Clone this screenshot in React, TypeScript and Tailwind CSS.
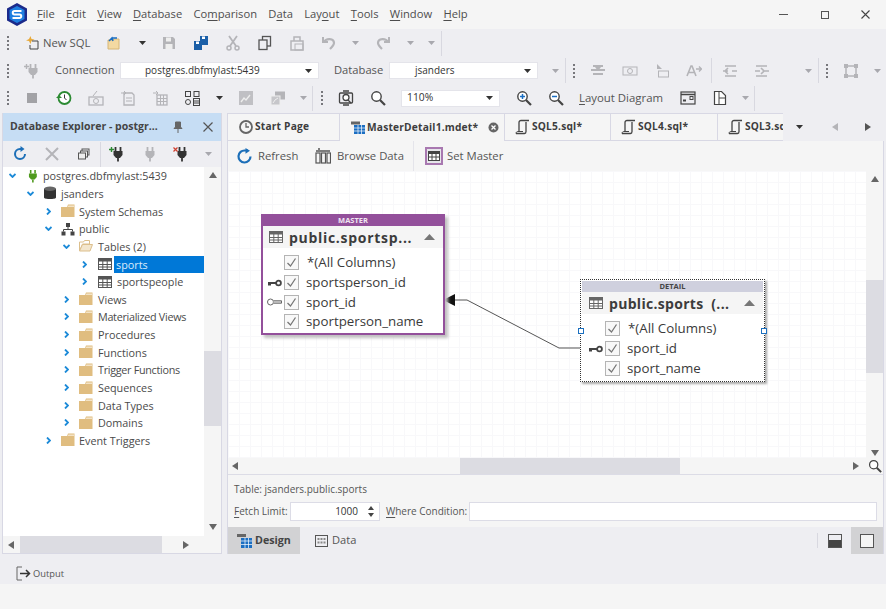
import { ReactNode } from 'react';

const Grip = () => (
  <div className="w-[16px] h-[16px] flex flex-col items-center justify-between py-[1px] shrink-0">
    <span className="w-[2px] h-[2px] bg-[#77777c]" />
    <span className="w-[2px] h-[2px] bg-[#77777c]" />
    <span className="w-[2px] h-[2px] bg-[#77777c]" />
    <span className="w-[2px] h-[2px] bg-[#77777c]" />
  </div>
);

const Sep = () => <div className="w-[1px] h-[25px] bg-[#d8d8e0] shrink-0" />;

const Caret = ({ w = 'w-[20px]', dim = false }: { w?: string; dim?: boolean }) => (
  <div className={`${w} flex justify-center shrink-0`}>
    <svg width="7" height="4" viewBox="0 0 7 4">
      <path d="M0 0h7L3.500 4z" fill={dim ? '#a8a8ae' : '#333'} />
    </svg>
  </div>
);

const Slot = ({ children }: { children: ReactNode }) => (
  <div className="w-[32px] flex justify-center items-center shrink-0">{children}</div>
);

const Ic = ({ children, size = 16 }: { children: ReactNode; size?: number }) => (
  <svg width={size} height={size} viewBox="0 0 16 16" fill="none" className="shrink-0">
    {children}
  </svg>
);

const G = '#b4b4b8';

const PlugIcon = ({ c = G, size = 16, mark }: { c?: string; size?: number; mark?: 'plus' | 'x' | 'greyPlus' }) => (
  <Ic size={size}>
    <path d="M6.500 1v4M11.500 1v4" stroke={c} strokeWidth="1.800" />
    <path d="M4.500 5h9v4l-2.500 3H7L4.500 9z" fill={c} />
    <path d="M9 12v3.500" stroke={c} strokeWidth="1.800" />
    {mark === 'plus' && <path d="M0 3.500h5M2.500 1v5" stroke="#2c8a33" strokeWidth="1.400" />}
    {mark === 'greyPlus' && <path d="M0 3.500h5M2.500 1v5" stroke={c} strokeWidth="1.400" />}
    {mark === 'x' && <path d="M.5 1.500l4 4M4.500 1.500l-4 4" stroke="#d04030" strokeWidth="1.200" />}
  </Ic>
);

const GridIcon = ({ c = '#555' }: { c?: string }) => (
  <Ic>
    <rect x="1.500" y="2.500" width="13" height="11" fill="#fff" stroke={c} />
    <rect x="1.500" y="2.500" width="13" height="3" fill={c} />
    <path d="M1.500 8.500h13M1.500 11h13M5.800 5v8.500M10.200 5v8.500" stroke={c} />
  </Ic>
);

const Folder = ({ open = false }: { open?: boolean }) => (
  <svg width="14" height="14" viewBox="0 0 14 14" className="shrink-0">
    {open ? (
      <>
        <path d="M.5 12V3h4l1-1.500h5V5H3.500L.5 12z" fill="#fff" stroke="#dcbf8c" />
        <path d="M.5 12l3-6.500h10L11 12z" fill="#f3e6cd" stroke="#dcbf8c" />
      </>
    ) : (
      <>
        <path d="M0 3h6l1-2.500h6.500V13H0z" fill="#e0bd80" />
        <path d="M6.500 3l1-1.500h5.500V3z" fill="#f3e3c6" />
      </>
    )}
  </svg>
);

const Arrow = ({ open }: { open: boolean }) => (
  <div className="w-[19px] flex justify-start pl-[3px] shrink-0">
    {open ? (
      <svg width="7" height="5" viewBox="0 0 7 5">
        <path d="M.5 1L3.500 4 6.500 1" stroke="#1c8ad8" strokeWidth="1.800" fill="none" />
      </svg>
    ) : (
      <svg width="5" height="7" viewBox="0 0 5 7" className="ml-[1px]">
        <path d="M1 .5L4 3.500 1 6.500" stroke="#1c8ad8" strokeWidth="1.800" fill="none" />
      </svg>
    )}
  </div>
);

type TreeRow = {
  d: number;
  label: string;
  open?: boolean;
  icon: 'plug' | 'db' | 'schema' | 'folder' | 'openFolder' | 'table';
  sel?: boolean;
  tight?: boolean;
};

const tree: TreeRow[] = [
  { d: 0, label: 'postgres.dbfmylast:5439', open: true, icon: 'plug' },
  { d: 1, label: 'jsanders', open: true, icon: 'db' },
  { d: 2, label: 'System Schemas', icon: 'folder' },
  { d: 2, label: 'public', open: true, icon: 'schema' },
  { d: 3, label: 'Tables (2)', open: true, icon: 'openFolder' },
  { d: 4, label: 'sports', icon: 'table', sel: true },
  { d: 4, label: 'sportspeople', icon: 'table' },
  { d: 3, label: 'Views', icon: 'folder' },
  { d: 3, label: 'Materialized Views', icon: 'folder', tight: true },
  { d: 3, label: 'Procedures', icon: 'folder' },
  { d: 3, label: 'Functions', icon: 'folder' },
  { d: 3, label: 'Trigger Functions', icon: 'folder', tight: true },
  { d: 3, label: 'Sequences', icon: 'folder' },
  { d: 3, label: 'Data Types', icon: 'folder' },
  { d: 3, label: 'Domains', icon: 'folder' },
  { d: 2, label: 'Event Triggers', icon: 'folder' },
];

const indent = ['pl-[3px]', 'pl-[21px]', 'pl-[39px]', 'pl-[57px]', 'pl-[75px]'];

const TreeIcon = ({ icon }: { icon: TreeRow['icon'] }) => {
  if (icon === 'plug') return <PlugIcon c="#4f9a1e" size={14} />;
  if (icon === 'db')
    return (
      <svg width="14" height="14" viewBox="0 0 14 14" className="shrink-0">
        <path d="M1 3v8.500c0 2 12 2 12 0V3z" fill="#333" />
        <ellipse cx="7" cy="2.800" rx="6" ry="2.200" fill="#666" />
      </svg>
    );
  if (icon === 'schema')
    return (
      <svg width="14" height="14" viewBox="0 0 14 14" className="shrink-0">
        <rect x="5" y="1" width="4" height="4" fill="#444" />
        <rect x="0.500" y="9.500" width="4" height="4" fill="#444" />
        <rect x="9.500" y="9.500" width="4" height="4" fill="#444" />
        <path d="M7 5v2.500M2.500 9.500v-2h9v2" stroke="#444" fill="none" />
      </svg>
    );
  if (icon === 'folder') return <Folder />;
  if (icon === 'openFolder') return <Folder open />;
  return <GridIcon />;
};

const U = ({ children }: { children: ReactNode }) => <span className="underline underline-offset-2">{children}</span>;

const Combo = ({ w, text, pad }: { w: string; text: string; pad: string }) => (
  <div className={`${w} ${pad} h-[17px] bg-white border border-[#e4e4ea] flex items-center justify-between pr-[6px] shrink-0 text-[10px] text-[#333]`}>
    <span>{text}</span>
    <svg width="7" height="4" viewBox="0 0 7 4">
      <path d="M0 0h7L3.500 4z" fill="#333" />
    </svg>
  </div>
);

const Check = () => (
  <div className="w-[15px] h-[15px] border border-[#b4b4b4] bg-[#f8f8f8] flex items-center justify-center shrink-0">
    <svg width="11" height="11" viewBox="0 0 11 11">
      <path d="M1.500 6l3 3 5-7.500" stroke="#777" strokeWidth="1.300" fill="none" />
    </svg>
  </div>
);

const KeyIcon = ({ hollow = false }: { hollow?: boolean }) => (
  <svg width="15" height="8" viewBox="0 0 15 8" className="shrink-0">
    {hollow ? (
      <>
        <circle cx="3.500" cy="4" r="3" fill="#fff" stroke="#666" />
        <path d="M6.500 2.800h8v2.400h-8" fill="#ddd" stroke="#666" />
      </>
    ) : (
      <>
        <path d="M1 3h8v2H4v1.500H1z" fill="#444" />
        <circle cx="11.500" cy="4" r="2.400" fill="#fff" stroke="#444" strokeWidth="1.800" />
      </>
    )}
  </svg>
);

const EntityRow = ({ name, keyIcon, star }: { name: string; keyIcon?: 'pk' | 'fk'; star?: boolean }) => (
  <div className="h-[19.700px] flex items-center">
    <div className="w-[19px] flex justify-center shrink-0">
      {keyIcon && <KeyIcon hollow={keyIcon === 'fk'} />}
    </div>
    <Check />
    <span className={`${star ? 'ml-[8px]' : 'ml-[7px]'} text-[13.300px] leading-none text-[#3a3a3a] whitespace-nowrap`}>{name}</span>
  </div>
);

const EntityTitle = ({ title, pad, track }: { title: string; pad: string; track: string }) => (
  <div className={`h-[22px] bg-[#f5f5f5] flex items-center ${pad} pr-[8px]`}>
    <GridIcon c="#666" />
    <span className={`ml-[5px] flex-1 font-bold text-[14px] ${track} text-[#3c3c3c] whitespace-pre overflow-hidden`}>{title}</span>
    <svg width="11" height="6" viewBox="0 0 11 6">
      <path d="M0 6h11L5.500 0z" fill="#777" />
    </svg>
  </div>
);

const Tab = ({ w, icon, label, active, close }: { w: string; icon: ReactNode; label: string; active?: boolean; close?: boolean }) => (
  <div className={`${w} h-[28px] shrink-0 bg-[#f5f5f5] border-t border-r border-[#d8d8e4] flex items-center pl-[10px] overflow-hidden ${active ? 'border-b-0' : 'border-b'}`}>
    {icon}
    <span className="ml-[1px] font-bold text-[10.200px] tracking-[0.2px] text-[#3d3d3d] whitespace-nowrap">{label}</span>
    {close && (
      <svg width="11" height="11" viewBox="0 0 11 11" className="ml-[10px] shrink-0">
        <circle cx="5.500" cy="5.500" r="5" fill="#666" />
        <path d="M3.500 3.500l4 4M7.500 3.500l-4 4" stroke="#fff" strokeWidth="1.300" />
      </svg>
    )}
  </div>
);

const ScriptIcon = () => (
  <Ic>
    <path d="M4 13V3.500C4 2 5 1.500 6 1.500h8M1 14.500h8.500c1 0 1.500-1 1.500-2V3" stroke="#444" strokeWidth="1.300" fill="none" />
    <path d="M1 14.500c0-1.500 1-2 2-2h5" stroke="#444" fill="none" />
  </Ic>
);

const Tri = ({ dir, c = '#666' }: { dir: 'l' | 'r' | 'u' | 'd'; c?: string }) => {
  const p = { l: 'M6 0v8L0 4z', r: 'M0 0v8l6-4z', u: 'M0 6h8L4 0z', d: 'M0 0h8L4 6z' }[dir];
  return (
    <svg width="8" height="8" viewBox="0 0 8 8" className="shrink-0">
      <path d={p} fill={c} />
    </svg>
  );
};

const MagIcon = ({ sign, size = 16 }: { sign?: '+' | '-'; size?: number }) => (
  <Ic size={size}>
    <circle cx="6.500" cy="6.500" r="4.700" stroke="#444" strokeWidth="1.400" fill="#fff" />
    <path d="M10 10l5 5" stroke="#444" strokeWidth="2.200" />
    {sign && <path d="M4 6.500h5" stroke="#1b6ec2" strokeWidth="1.500" />}
    {sign === '+' && <path d="M6.500 4v5" stroke="#1b6ec2" strokeWidth="1.500" />}
  </Ic>
);

export default function App() {
  return (
    <div className="w-[886px] h-[609px] overflow-hidden flex flex-col bg-[#eeeef2] text-[11px] text-[#444] font-['Open_Sans','Noto_Sans',sans-serif]">
      {/* title bar */}
      <div className="h-[29px] bg-[#f5f5f5] flex items-center shrink-0">
        <svg width="22" height="23" viewBox="0 0 22 23" className="ml-[6px] shrink-0">
          <path d="M11 0l10 5.500v12L11 23 1 17.500v-12z" fill="#1b2a8a" />
          <path d="M11 3l7.500 4v9L11 20l-7.500-4V7z" fill="#1f7fe0" />
          <path d="M15.500 8H8.500a1.500 1.500 0 000 3.500h5a1.500 1.500 0 010 3.500H6.500" stroke="#fff" strokeWidth="2" fill="none" />
        </svg>
        <div className="ml-[9px] flex gap-[11.300px] text-[11.200px] text-[#4d4d4d]">
          <span><U>F</U>ile</span>
          <span><U>E</U>dit</span>
          <span><U>V</U>iew</span>
          <span><U>D</U>atabase</span>
          <span>Co<U>m</U>parison</span>
          <span>D<U>a</U>ta</span>
          <span>Lay<U>o</U>ut</span>
          <span><U>T</U>ools</span>
          <span><U>W</U>indow</span>
          <span><U>H</U>elp</span>
        </div>
        <div className="flex-1" />
        <div className="w-[27px] flex justify-center"><div className="w-[9px] h-[1px] bg-[#555]" /></div>
        <div className="ml-[14px] w-[27px] flex justify-center"><div className="w-[8px] h-[8px] border border-[#555]" /></div>
        <div className="ml-[14px] mr-[7px] w-[27px] flex justify-center">
          <svg width="9" height="9" viewBox="0 0 9 9"><path d="M.5.5l8 8M8.500.5l-8 8" stroke="#444" strokeWidth="1.100" /></svg>
        </div>
      </div>

      {/* toolbar 1 */}
      <div className="h-[28px] flex items-center shrink-0">
        <Grip />
        <div className="w-[83px] flex items-center shrink-0">
          <svg width="16" height="16" viewBox="0 0 16 16" className="ml-[8px] shrink-0">
            <path d="M5 4l1.500-3 1 3 3 .5-3 1.500-1 3-1.500-3-3-.5z" fill="#e8a93a" />
            <path d="M8 6h6v8H6v-4" stroke="#444" fill="none" />
          </svg>
          <span className="ml-[3px] text-[11.300px] text-[#555]">New SQL</span>
        </div>
        <Slot>
          <svg width="16" height="14" viewBox="0 0 16 14">
            <path d="M1 13V4h5l1-1h5v10z" fill="#f3d9a2" stroke="#d6b676" />
            <path d="M2 5l3-3 1 3M5 2h5" stroke="#1b6ec2" strokeWidth="1.500" fill="none" />
          </svg>
        </Slot>
        <Caret w="w-[22px]" />
        <Slot>
          <Ic><path d="M2 2h10l2 2v10H2z" fill={G} /><rect x="5" y="2.500" width="5" height="4" fill="#eee" /><rect x="4.500" y="9" width="7" height="5" fill="#eee" /></Ic>
        </Slot>
        <Slot>
          <Ic>
            <path d="M1 6h8v9H1z" fill="#1b5fa8" /><path d="M7 1h8v9H7z" fill="#1b5fa8" />
            <rect x="3" y="6.500" width="3" height="2.500" fill="#fff" /><rect x="9" y="1.500" width="3" height="2.500" fill="#fff" />
          </Ic>
        </Slot>
        <Slot>
          <Ic><path d="M4 1l7 10M12 1L5 11" stroke={G} strokeWidth="1.800" /><circle cx="4" cy="13" r="2" stroke={G} strokeWidth="1.500" /><circle cx="12" cy="13" r="2" stroke={G} strokeWidth="1.500" /></Ic>
        </Slot>
        <Slot>
          <Ic><rect x="5.500" y="1.500" width="8" height="9.500" stroke="#555" strokeWidth="1.300" /><rect x="2" y="5" width="8" height="9.500" fill="#eeeef2" stroke="#555" strokeWidth="1.300" /></Ic>
        </Slot>
        <Slot>
          <Ic><rect x="2" y="6" width="12" height="9" stroke={G} strokeWidth="1.500" /><rect x="6" y="9" width="8" height="6" stroke={G} /><path d="M5 6V2h6v4" stroke={G} strokeWidth="1.500" /></Ic>
        </Slot>
        <Slot>
          <Ic><path d="M2 2v5h5" stroke={G} strokeWidth="2" /><path d="M3 7c2-4 10-4 10 1 0 2-2 4-4 6" stroke={G} strokeWidth="2.200" /></Ic>
        </Slot>
        <Caret dim />
        <div className="ml-[2px]">
          <Slot>
            <Ic><path d="M14 2v5H9" stroke={G} strokeWidth="2" /><path d="M13 7C11 3 3 3 3 8c0 2 2 4 4 6" stroke={G} strokeWidth="2.200" /></Ic>
          </Slot>
        </div>
        <Caret w="w-[22px]" dim />
        <Caret w="w-[20px]" dim />
        <Sep />
      </div>

      {/* toolbar 2 */}
      <div className="h-[27px] flex items-center shrink-0">
        <Grip />
        <Slot><PlugIcon mark="greyPlus" /></Slot>
        <span className="ml-[7px] w-[65px] shrink-0 text-[11.200px] text-[#555]">Connection</span>
        <Combo w="w-[199px]" text="postgres.dbfmylast:5439" pad="pl-[24px]" />
        <span className="ml-[15px] w-[55px] shrink-0 text-[11.200px] text-[#555]">Database</span>
        <Combo w="w-[149px]" text="jsanders" pad="pl-[25px]" />
        <div className="ml-[7px]"><Caret dim /></div>
        <Sep />
        <Grip />
        <Slot><Ic><path d="M3 3h10M1 7h14M3 11h10" stroke={G} strokeWidth="2" /><path d="M5 4l3 4 3-4z" fill={G} /></Ic></Slot>
        <Slot><Ic><rect x="1" y="4" width="14" height="8" stroke={G} /><circle cx="8" cy="8" r="2.500" stroke={G} /></Ic></Slot>
        <Slot><Ic><path d="M3 1l5 5H3z" fill={G} /><rect x="4.500" y="8" width="10" height="6" stroke={G} /></Ic></Slot>
        <Slot><Ic><path d="M1 13L5 3h1l4 10M3 9.500h5" stroke={G} strokeWidth="1.600" /><path d="M10 6h5M13 3.500L15.500 6 13 8.500" stroke={G} strokeWidth="1.400" /></Ic></Slot>
        <div className="ml-[1px]"><Sep /></div>
        <div className="ml-[2px]"><Slot><Ic><path d="M3 3h11M3 13h11M1 8h5M10 8h5M6 5L3 8l3 3" stroke={G} strokeWidth="1.600" /></Ic></Slot></div>
        <Slot><Ic><path d="M2 3h11M2 13h11M1 8h5M10 8h5M7 5l3 3-3 3" stroke={G} strokeWidth="1.600" /></Ic></Slot>
        <div className="ml-[20px]"><Caret dim /></div>
        <Sep />
        <Grip />
        <Slot><Ic><path d="M1 1h4v4H1zM11 1h4v4h-4zM1 11h4v4H1zM11 11h4v4h-4z" fill={G} /><rect x="3" y="3" width="10" height="10" stroke={G} strokeWidth="1.500" /></Ic></Slot>
        <Caret dim />
      </div>

      {/* toolbar 3 */}
      <div className="h-[28px] flex items-center shrink-0">
        <Grip />
        <Slot><div className="w-[10px] h-[10px] bg-[#a2a2a6]" /></Slot>
        <Slot><Ic><circle cx="8.500" cy="8" r="6" stroke="#2c8a33" strokeWidth="1.800" fill="#fff" /><path d="M8.500 4.500V8l2 2" stroke="#333" /><path d="M0 8l3-3 3 3z" fill="#2c8a33" /></Ic></Slot>
        <Slot><Ic><rect x="1" y="7" width="14" height="8" stroke={G} strokeWidth="1.300" /><circle cx="8" cy="11" r="2.500" stroke={G} /><path d="M5 6l4-5" stroke={G} /></Ic></Slot>
        <Slot><Ic><path d="M4 3h8l2 2v10H4z" stroke={G} strokeWidth="1.300" /><path d="M1 3h5M4 1l2 2-2 2M6 8h6M6 11h6" stroke={G} /></Ic></Slot>
        <Slot><Ic><rect x="5" y="5" width="10" height="10" stroke={G} strokeWidth="1.300" /><path d="M5 8.500h10M5 11.500h10M8.500 5v10M11.500 5v10M1 3h5M4 1l2 2-2 2" stroke={G} /></Ic></Slot>
        <Slot><Ic><rect x="1.500" y="1.500" width="5" height="5" stroke="#444" /><rect x="10" y="1.500" width="5" height="5" stroke="#444" /><circle cx="4" cy="12" r="2.500" stroke="#444" /><rect x="9.500" y="8.500" width="6" height="7" stroke="#444" /><path d="M9.500 11h6M9.500 13h6" stroke="#444" /></Ic></Slot>
        <Caret w="w-[22px]" />
        <Slot><Ic><rect x="1" y="1" width="14" height="14" fill="#c0c0c4" /><path d="M3 12l3-4 2 2 4-5" stroke="#eee" strokeWidth="1.300" fill="none" /></Ic></Slot>
        <Slot><Ic><rect x="5" y="1.500" width="10" height="8" fill={G} /><rect x="1" y="6" width="9" height="9" fill="#c6c6ca" stroke="#eee" /><path d="M3 13l2-3 3-2" stroke="#eee" fill="none" /></Ic></Slot>
        <Caret w="w-[18px]" dim />
        <Sep />
        <div className="ml-[1px]"><Grip /></div>
        <Slot><Ic><rect x="1.500" y="3" width="13" height="10" rx="1" stroke="#444" strokeWidth="1.300" /><circle cx="8" cy="7.500" r="3" fill="#fff" stroke="#444" strokeWidth="1.300" /><path d="M10 10l3 3M5 1h6M5 15h6" stroke="#444" strokeWidth="1.300" /></Ic></Slot>
        <Slot><MagIcon /></Slot>
        <div className="ml-[7px] w-[99px] h-[17px] bg-white border border-[#e4e4ea] flex items-center justify-between pl-[5px] pr-[6px] shrink-0 text-[10.300px] text-[#333]">
          <span>110%</span>
          <svg width="7" height="4" viewBox="0 0 7 4"><path d="M0 0h7L3.500 4z" fill="#333" /></svg>
        </div>
        <div className="ml-[8px]"><Slot><MagIcon sign="+" /></Slot></div>
        <Slot><MagIcon sign="-" /></Slot>
        <span className="ml-[7px] w-[93px] shrink-0 text-[11.400px] text-[#555] whitespace-nowrap"><U>L</U>ayout Diagram</span>
        <Slot><Ic><rect x="1" y="2" width="14" height="12" stroke="#444" strokeWidth="1.200" /><path d="M1 4.500h14" stroke="#444" strokeWidth="1.500" /><rect x="3" y="9.500" width="3" height="2" fill="#444" /><rect x="10" y="6.500" width="3" height="3" stroke="#444" /></Ic></Slot>
        <Slot><Ic><path d="M2.500 1.500h7l4 4v9h-11z" fill="#fff" stroke="#444" strokeWidth="1.200" /><path d="M7 1.500v13M7 8h6.500" stroke="#444" /></Ic></Slot>
        <Caret w="w-[18px]" dim />
        <Sep />
      </div>

      {/* main */}
      <div className="flex-1 min-h-0 flex pt-[1px]">
        {/* explorer */}
        <div className="ml-[2px] w-[220px] h-[441px] shrink-0 flex flex-col border-x border-b border-[#d8d8e4] bg-[#f5f5f5]">
          <div className="h-[28px] bg-[#c6ddf4] flex items-center pl-[7px] shrink-0">
            <span className="font-bold text-[10.500px] text-[#444] whitespace-nowrap w-[163px]">Database Explorer - postgr...</span>
            <svg width="10" height="12" viewBox="0 0 10 12"><path d="M2.500 1h5v5l1.500 1.500H1L2.500 6zM5 8v4" fill="#666" stroke="#666" /></svg>
            <svg width="10" height="10" viewBox="0 0 10 10" className="ml-[20px]"><path d="M.5.5l9 9M9.500.5l-9 9" stroke="#555" strokeWidth="1.200" /></svg>
          </div>
          <div className="h-[26px] bg-[#eeeef2] flex items-center shrink-0">
            <div className="w-[32px] flex justify-center ml-[1px]">
              <Ic><path d="M13 8A5 5 0 1 1 8 3h3" stroke="#1c6fb8" strokeWidth="2" /><path d="M8.500 0l4 3-4 3z" fill="#1c6fb8" /></Ic>
            </div>
            <Slot><Ic><path d="M2 2l12 12M14 2L2 14" stroke={G} strokeWidth="2" /></Ic></Slot>
            <Slot><svg width="12" height="12" viewBox="0 0 12 12"><rect x="4" y="1" width="7" height="6" stroke="#555" fill="none" /><rect x="2.500" y="3" width="7" height="6" stroke="#555" fill="#eee" /><rect x=".5" y="5" width="7" height="6" stroke="#555" fill="#eee" /></svg></Slot>
            <Sep />
            <Slot><PlugIcon c="#333" mark="plus" /></Slot>
            <Slot><PlugIcon /></Slot>
            <Slot><PlugIcon c="#333" mark="x" /></Slot>
            <div className="ml-[1px]"><Caret dim /></div>
          </div>
          <div className="flex-1 min-h-0 flex">
            <div className="flex-1 min-w-0 bg-white flex flex-col">
              {tree.map((r) => (
                <div key={r.label} className={`h-[17.650px] flex items-center shrink-0 whitespace-nowrap ${indent[r.d]}`}>
                  <Arrow open={!!r.open} />
                  <TreeIcon icon={r.icon} />
                  <span className={`text-[10.800px] leading-[17px] ${r.tight ? 'tracking-[-0.3px]' : ''} ${r.sel ? 'ml-[1px] flex-1 pl-[2px] bg-[#0078d7] text-[#dcecfb]' : r.d >= 3 && r.icon !== 'table' ? 'ml-[5px] text-[#4a4a4a]' : 'ml-[4px] text-[#4a4a4a]'}`}>{r.label}</span>
                </div>
              ))}
            </div>
            <div className="w-[17px] shrink-0 bg-[#f5f5f5] flex flex-col items-center">
              <div className="h-[17px] flex items-center"><Tri dir="u" /></div>
              <div className="h-[167px]" />
              <div className="w-full h-[75px] bg-[#dcdce2]" />
              <div className="flex-1" />
              <div className="h-[17px] flex items-center"><Tri dir="d" /></div>
            </div>
          </div>
          <div className="h-[17px] shrink-0 flex items-center bg-[#f5f5f5]">
            <div className="w-[17px] flex justify-center"><Tri dir="l" /></div>
            <div className="w-[142px] h-full bg-[#dcdce2]" />
            <div className="flex-1" />
            <div className="w-[17px] flex justify-center"><Tri dir="r" /></div>
            <div className="w-[26px]" />
          </div>
        </div>

        {/* document */}
        <div className="ml-[5px] flex-1 min-w-0 flex flex-col h-[442px]">
          {/* tabs */}
          <div className="h-[28px] flex items-center shrink-0 border-l border-[#d8d8e4]">
            <Tab w="w-[112px]" label="Start Page" icon={<Ic><circle cx="8" cy="8" r="6" stroke="#666" strokeWidth="1.800" /><path d="M8 4v4h3" stroke="#666" strokeWidth="1.300" /></Ic>} />
            <Tab w="w-[165px]" active close label="MasterDetail1.mdet*" icon={<Ic><rect x="1" y="1.500" width="9" height="3" fill="#666" /><rect x="4" y="5" width="11" height="9" fill="#1b6ec2" /><path d="M4 8h11M4 11h11M8 5v9M11.500 5v9" stroke="#fff" strokeWidth=".7" /></Ic>} />
            <Tab w="w-[106px]" label="SQL5.sql*" icon={<ScriptIcon />} />
            <Tab w="w-[107px]" label="SQL4.sql*" icon={<ScriptIcon />} />
            <div className="w-[65px] h-[28px] shrink-0 bg-[#f5f5f5] border-t border-[#d8d8e4] border-b flex items-center pl-[10px] overflow-hidden">
              <ScriptIcon />
              <span className="ml-[1px] font-bold text-[10.200px] tracking-[0.2px] text-[#3d3d3d] whitespace-nowrap">SQL3.sql*</span>
            </div>
            <div className="ml-[11px] w-[10px] flex justify-center"><svg width="7" height="4" viewBox="0 0 7 4"><path d="M0 0h7L3.500 4z" fill="#333" /></svg></div>
            <div className="ml-[28px]"><Tri dir="l" c="#b4b4b8" /></div>
            <div className="ml-[25px]"><Tri dir="r" c="#555" /></div>
          </div>
          <div className="flex-1 min-h-0 mr-[2px] border-x border-b border-[#d8d8e4] flex flex-col bg-[#f5f5f5]">
            {/* doc toolbar */}
            <div className="h-[30px] flex items-center shrink-0 bg-[#f5f5f5] pl-[9px]">
              <Ic><path d="M13.500 8.500A6 6 0 1 1 8 2.500h3" stroke="#1c6fb8" strokeWidth="2.200" /><path d="M8.500 0l4.500 2.800-4.500 3z" fill="#1c6fb8" /></Ic>
              <span className="ml-[5px] w-[39px] shrink-0 text-[11.300px] text-[#555] whitespace-nowrap">Refresh</span>
              <div className="ml-[18px]">
                <Ic><rect x="1" y="5" width="4" height="10" stroke="#555" strokeWidth="1.200" /><rect x="6.500" y="5" width="4" height="10" stroke="#555" strokeWidth="1.200" /><rect x="12" y="5" width="3.500" height="10" stroke="#555" strokeWidth="1.200" /><path d="M1 3h14M3 1h2" stroke="#555" strokeWidth="1.500" /></Ic>
              </div>
              <span className="ml-[6px] w-[67px] shrink-0 text-[11.300px] text-[#555] whitespace-nowrap">Browse Data</span>
              <div className="ml-[9px] w-[1px] h-[30px] bg-[#e4e4ea]" />
              <div className="ml-[11px] w-[18px] h-[18px] border-2 border-[#a878b0] bg-[#e6e6ea] flex items-center justify-center">
                <svg width="12" height="10" viewBox="0 0 12 10"><rect x=".5" y=".5" width="11" height="9" fill="#fff" stroke="#444" /><rect x=".5" y=".5" width="11" height="2.500" fill="#444" /><path d="M.5 6h11M4 3v6.500M8 3v6.500" stroke="#444" /></svg>
              </div>
              <span className="ml-[4px] text-[11.300px] text-[#555] whitespace-nowrap">Set Master</span>
            </div>

            {/* canvas */}
            <div className="h-[287px] shrink-0 flex">
              <div className="relative flex-1 min-w-0 overflow-hidden bg-white bg-[linear-gradient(#f8f8fa_1px,transparent_1px),linear-gradient(90deg,#f8f8fa_1px,transparent_1px)] bg-[size:11px_11px]">
                {/* connector */}
                <svg className="absolute left-[215px] top-[120px]" width="140" height="65" viewBox="0 0 140 65" fill="none">
                  <path d="M137 57H116L24 9H12" stroke="#555" />
                  <path d="M0 9L12 3v12z" fill="#111" />
                </svg>

                {/* master */}
                <div className="absolute left-[33px] top-[43px] w-[184px] h-[121px] border-2 border-[#93509b] bg-white shadow-[3px_3px_3px_#c0c0c0]">
                  <div className="h-[10px] bg-[#93509b] flex items-center justify-center text-[7.500px] font-bold leading-none text-[#f0e6f2]">MASTER</div>
                  <EntityTitle title="public.sportsp..." pad="pl-[5px]" track="tracking-[0.7px]" />
                  <div className="pt-[5px] pl-[2px]">
                    <EntityRow name="*(All Columns)" star />
                    <EntityRow name="sportsperson_id" keyIcon="pk" />
                    <EntityRow name="sport_id" keyIcon="fk" />
                    <EntityRow name="sportperson_name" />
                  </div>
                </div>

                {/* detail */}
                <div className="absolute left-[352px] top-[108px] w-[185px] h-[103px] border border-dotted border-[#333] p-[1px] shadow-[2px_2px_2px_#aaa] bg-white">
                  <div className="h-[11px] bg-[#cfd0de] flex items-center justify-center text-[7.500px] font-bold leading-none text-[#444]">DETAIL</div>
                  <EntityTitle title="public.sports  (..." pad="pl-[6px]" track="tracking-[0.3px]" />
                  <div className="pt-[5px] pl-[4px]">
                    <EntityRow name="*(All Columns)" star />
                    <EntityRow name="sport_id" keyIcon="pk" />
                    <EntityRow name="sport_name" />
                  </div>
                  <div className="absolute left-[-3px] top-[48px] w-[6px] h-[6px] bg-white border border-[#1c70c0]" />
                  <div className="absolute right-[-3px] top-[48px] w-[6px] h-[6px] bg-white border border-[#1c70c0]" />
                </div>
              </div>
              <div className="w-[17px] shrink-0 bg-[#f5f5f5] flex flex-col items-center">
                <div className="h-[16px] flex items-center pt-[2px]"><Tri dir="u" /></div>
                <div className="h-[93px]" />
                <div className="w-full h-[93px] bg-[#dcdce2]" />
                <div className="flex-1" />
                <Tri dir="d" />
              </div>
            </div>

            {/* h scroll */}
            <div className="h-[17px] shrink-0 flex items-center border-b border-[#dcdce6] bg-[#f5f5f5]">
              <div className="w-[16px] flex justify-center"><Tri dir="l" /></div>
              <div className="w-[216px]" />
              <div className="w-[220px] h-full bg-[#dcdce2]" />
              <div className="flex-1" />
              <div className="w-[8px] flex justify-center"><Tri dir="r" /></div>
              <div className="ml-[7px] mr-[1px]"><MagIcon size={14} /></div>
            </div>

            {/* info */}
            <div className="h-[52px] shrink-0 bg-[#f5f5f5] pl-[6px] text-[10px] text-[#555]">
              <div className="h-[27px] flex items-center pt-[2px]">Table: jsanders.public.sports</div>
              <div className="flex items-center">
                <span className="w-[56px] shrink-0 whitespace-nowrap"><U>F</U>etch Limit:</span>
                <div className="w-[90px] h-[19px] bg-white border border-[#dcdce6] flex items-center justify-end pr-[5px] shrink-0 text-[#333]">
                  <span className="mr-[10px]">1000</span>
                  <div className="flex flex-col gap-[3px]">
                    <svg width="6" height="4" viewBox="0 0 6 4" className="block"><path d="M0 4h6L3 0z" fill="#444" /></svg>
                    <svg width="6" height="4" viewBox="0 0 6 4" className="block"><path d="M0 0h6L3 4z" fill="#444" /></svg>
                  </div>
                </div>
                <span className="ml-[6px] w-[83px] shrink-0 whitespace-nowrap"><U>W</U>here Condition:</span>
                <div className="w-[408px] h-[19px] bg-white border border-[#dcdce6] shrink-0" />
              </div>
            </div>

            {/* view tabs */}
            <div className="h-[27px] shrink-0 bg-[#eeeef2] flex items-center">
              <div className="w-[72px] h-full bg-[#d2d2d4] flex items-center pl-[9px]">
                <Ic><rect x="0" y="1" width="9" height="3" fill="#666" /><rect x="4" y="5" width="11" height="10" fill="#1b6ec2" /><path d="M4 8h11M4 11.500h11M8 5v10M11.500 5v10" stroke="#fff" strokeWidth=".7" /></Ic>
                <span className="ml-[2px] font-bold text-[10.700px] text-[#444]">Design</span>
              </div>
              <div className="ml-[14px]">
                <Ic><rect x="1.500" y="2.500" width="12" height="11" stroke="#555" /><path d="M3.500 5h2v2h-2zM6.500 5h2v2h-2zM9.500 5h2v2h-2zM3.500 8.500h2v2h-2zM6.500 8.500h2v2h-2zM9.500 8.500h2v2h-2z" fill="#888" /></Ic>
              </div>
              <span className="ml-[2px] text-[11.100px] text-[#555]">Data</span>
              <div className="flex-1" />
              <div className="w-[1px] h-[15px] bg-[#d8d8e0]" />
              <div className="ml-[10px] w-[14px] h-[14px] border border-[#555] flex flex-col justify-end shrink-0"><div className="h-[7px] bg-[#444]" /></div>
              <div className="ml-[9px] w-[32px] h-full bg-[#d2d2d4] flex items-center justify-center"><div className="w-[14px] h-[14px] border border-[#555] bg-[#f5f5f5]" /></div>
            </div>
          </div>
        </div>
      </div>

      {/* output strip */}
      <div className="h-[30px] shrink-0 bg-[#eeeef2] flex items-center pl-[16px] pt-[9px]">
        <svg width="15" height="15" viewBox="0 0 15 15"><path d="M6 1H1v13h5" stroke="#666" fill="none" /><path d="M4 7.500h9M10 4l3.500 3.500L10 11" stroke="#333" strokeWidth="1.500" fill="none" /></svg>
        <span className="ml-[2px] text-[9.300px] text-[#555]">Output</span>
      </div>
      <div className="h-[25px] shrink-0 bg-[#f5f5f5]" />
    </div>
  );
}
